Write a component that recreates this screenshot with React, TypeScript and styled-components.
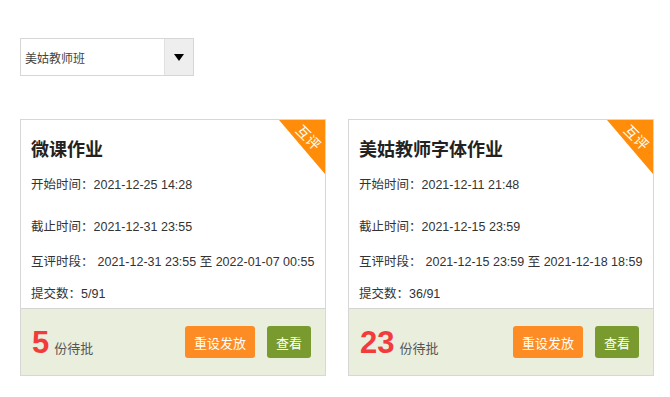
import React from 'react'
import styled, { createGlobalStyle } from 'styled-components'

const GlobalStyle = createGlobalStyle`
  body {
    margin: 0;
    background: #fff;
    font-family: "Liberation Sans", "Noto Sans CJK SC", sans-serif;
    color: #333;
  }
`

const Page = styled.div`
  padding: 38px 0 0 20px;
`

const Select = styled.div`
  display: flex;
  width: 172px;
  height: 36px;
  border: 1px solid #d6d6d6;
  background: #fff;
`

const SelectText = styled.div`
  flex: 1;
  display: flex;
  align-items: center;
  padding-left: 4px;
  font-size: 12px;
  color: #444;
`

const SelectArrow = styled.div`
  width: 28px;
  background: #eeeeee;
  border-left: 1px solid #e0e0e0;
  display: flex;
  align-items: center;
  justify-content: center;

  &::after {
    content: '';
    border-left: 5px solid transparent;
    border-right: 5px solid transparent;
    border-top: 7px solid #000;
  }
`

const CardRow = styled.div`
  display: flex;
  gap: 22px;
  margin-top: 43px;
`

const Card = styled.div`
  position: relative;
  flex-shrink: 0;
  width: 304px;
  height: 255px;
  border: 1px solid #d7d7d7;
  display: flex;
  flex-direction: column;
  overflow: hidden;
`

const Badge = styled.div`
  position: absolute;
  top: 0;
  right: 0;
  width: 46px;
  height: 54px;
  background: #ff8d0a;
  clip-path: polygon(0 0, 100% 0, 100% 100%);

  span {
    position: absolute;
    top: 7px;
    right: 2px;
    color: #fff;
    font-size: 14px;
    transform: rotate(45deg);
  }
`

const Body = styled.div`
  flex: 1;
  padding: 18px 10px 0;
`

const Title = styled.h3`
  margin: 0;
  font-size: 18px;
  line-height: 24px;
  font-weight: bold;
  color: #222;
`

const Row = styled.p<{ $top: number }>`
  margin: ${({ $top }) => $top}px 0 0;
  font-size: 12.5px;
  line-height: 20px;
  color: #333;
  white-space: nowrap;
`

const Value = styled.span<{ $gap?: number }>`
  margin-left: ${({ $gap }) => $gap || 0}px;
`

const Footer = styled.div`
  height: 66px;
  border-top: 1px solid #d4d4d4;
  background: #e9eedd;
  display: flex;
  align-items: center;
  padding: 0 14px 0 11px;
`

const Pending = styled.div`
  flex: 1;
  display: flex;
  align-items: baseline;
`

const Count = styled.span`
  font-size: 31px;
  font-weight: bold;
  line-height: 1;
  color: #f23c3c;
  margin-right: 5px;
`

const PendingLabel = styled.span`
  font-size: 13px;
  color: #555;
`

const Button = styled.button<{ $tone: 'orange' | 'green' }>`
  height: 32px;
  border: none;
  border-radius: 3px;
  padding: 0 9px;
  margin-left: 12px;
  font-family: inherit;
  font-size: 13px;
  color: #fff;
  background: ${({ $tone }) => ($tone === 'orange' ? '#fd8c25' : '#789a2e')};
  cursor: pointer;
`

const tasks = [
  {
    title: '微课作业',
    start: '2021-12-25 14:28',
    end: '2021-12-31 23:55',
    review: '2021-12-31 23:55 至 2022-01-07 00:55',
    submitted: '5/91',
    pending: 5,
  },
  {
    title: '美姑教师字体作业',
    start: '2021-12-11 21:48',
    end: '2021-12-15 23:59',
    review: '2021-12-15 23:59 至 2021-12-18 18:59',
    submitted: '36/91',
    pending: 23,
  },
]

const App = () => {
  return (
    <Page>
      <GlobalStyle />
      <Select>
        <SelectText>美姑教师班</SelectText>
        <SelectArrow />
      </Select>
      <CardRow>
        {tasks.map((t) => (
          <Card key={t.title}>
            <Badge>
              <span>互评</span>
            </Badge>
            <Body>
              <Title>{t.title}</Title>
              <Row $top={13}>
                开始时间：<Value>{t.start}</Value>
              </Row>
              <Row $top={22}>
                截止时间：<Value>{t.end}</Value>
              </Row>
              <Row $top={15}>
                互评时段：<Value $gap={4}>{t.review}</Value>
              </Row>
              <Row $top={12}>
                提交数：<Value>{t.submitted}</Value>
              </Row>
            </Body>
            <Footer>
              <Pending>
                <Count>{t.pending}</Count>
                <PendingLabel>份待批</PendingLabel>
              </Pending>
              <Button $tone="orange">重设发放</Button>
              <Button $tone="green">查看</Button>
            </Footer>
          </Card>
        ))}
      </CardRow>
    </Page>
  )
}

export default App
